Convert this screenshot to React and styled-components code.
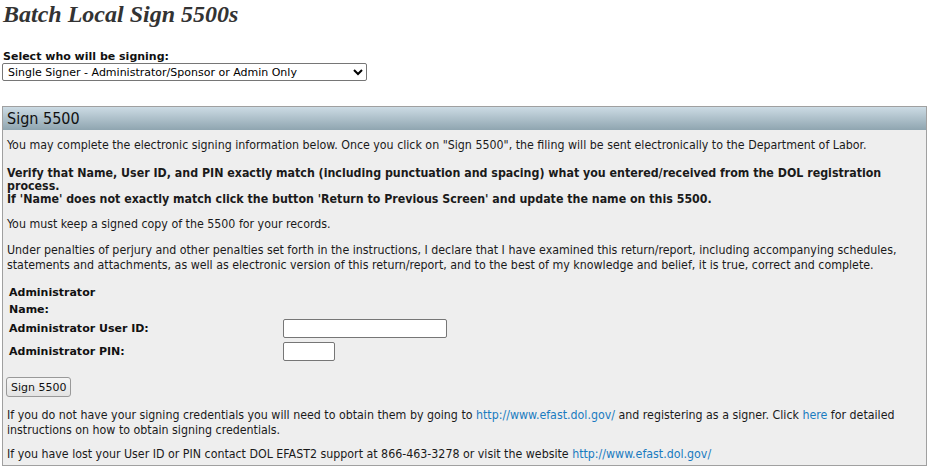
import styled, { createGlobalStyle } from 'styled-components'

const Global = createGlobalStyle`
  body {
    margin: 0;
    padding: 0 3px 0 2px;
    background: #fff;
    font-family: "DejaVu Sans Condensed", "DejaVu Sans", sans-serif;
    color: #1a1a1a;
  }
`;

const Title = styled.h1`
  margin: 0 0 0 1px;
  font-family: "Liberation Serif", serif;
  font-style: italic;
  font-weight: bold;
  font-size: 24px;
  line-height: 28px;
  color: #333;
`;

const SignerField = styled.div`
  margin-top: 22px;
  display: flex;
  flex-direction: column;
  align-items: flex-start;
`;

const SignerLabel = styled.label`
  font-family: "DejaVu Sans", sans-serif;
  font-weight: bold;
  font-size: 11px;
  line-height: 13px;
  padding-left: 1px;
  color: #111;
`;

const Select = styled.select`
  width: 365px;
  height: 18px;
  margin: 0;
  padding: 0 0 0 1px;
  font-family: "DejaVu Sans", sans-serif;
  font-size: 11px;
  color: #000;
  border: 1px solid #767676;
  border-radius: 2px;
  background: #fff;
`;

const Panel = styled.section`
  margin-top: 25px;
  border: 1px solid #a0a0a0;
  background: #eeeeee;
`;

const PanelHeader = styled.div`
  height: 23px;
  padding-left: 4px;
  background: linear-gradient(#ccdbe4, #8fa5b0);
  font-family: "DejaVu Sans Condensed", "DejaVu Sans", sans-serif;
  font-size: 16px;
  line-height: 23px;
  color: #111;
`;

const PanelBody = styled.div`
  padding: 8px 4px 3px 4px;
  font-size: 12.3px;
  line-height: 15px;
`;

const Para = styled.p`
  margin: 0 0 ${p => p.$gap ?? 11}px 0;
  font-weight: ${p => (p.$bold ? 'bold' : 'normal')};
  line-height: ${p => (p.$bold ? 13 : 15)}px;
`;

const Fields = styled.div`
  display: grid;
  grid-template-columns: 274px auto;
  align-items: center;
  row-gap: 4px;
  padding: 5px 0 0 2px;
  justify-items: start;
`;

const FieldLabel = styled.div`
  font-family: "DejaVu Sans", sans-serif;
  font-weight: bold;
  font-size: 11px;
  line-height: 17px;
  color: #111;
  margin-bottom: ${p => (p.$tight ? -3 : 0)}px;
`;

const TextInput = styled.input`
  box-sizing: border-box;
  width: ${p => p.$w}px;
  height: 19px;
  margin: 0;
  border: 1px solid #767676;
  border-radius: 2px;
  background: #fff;
`;

const SignButton = styled.button`
  margin: 16px 0 11px -1px;
  height: 20px;
  padding: 0 4px;
  font-family: "DejaVu Sans", sans-serif;
  font-size: 11px;
  color: #111;
  border: 1px solid #999;
  border-radius: 3px;
  background: linear-gradient(#f5f5f5, #e3e3e3);
`;

const Link = styled.a`
  color: #1a7bc0;
  text-decoration: none;
`;

export default function App() {
  return (
    <>
      <Global />
      <Title>Batch Local Sign 5500s</Title>
      <SignerField>
        <SignerLabel htmlFor="signer">Select who will be signing:</SignerLabel>
        <Select id="signer" defaultValue="single">
          <option value="single">Single Signer - Administrator/Sponsor or Admin Only</option>
        </Select>
      </SignerField>
      <Panel>
        <PanelHeader>Sign 5500</PanelHeader>
        <PanelBody>
          <Para $gap={14}>
            You may complete the electronic signing information below. Once you click on "Sign 5500", the filing will be sent electronically to the Department of Labor.
          </Para>
          <Para $bold $gap={11}>
            Verify that Name, User ID, and PIN exactly match (including punctuation and spacing) what you entered/received from the DOL registration process.
            <br />
            If 'Name' does not exactly match click the button 'Return to Previous Screen' and update the name on this 5500.
          </Para>
          <Para>You must keep a signed copy of the 5500 for your records.</Para>
          <Para $gap={6}>
            Under penalties of perjury and other penalties set forth in the instructions, I declare that I have examined this return/report, including accompanying schedules, statements and attachments, as well as electronic version of this return/report, and to the best of my knowledge and belief, it is true, correct and complete.
          </Para>
          <Fields>
            <FieldLabel $tight>
              Administrator
              <br />
              Name:
            </FieldLabel>
            <div />
            <FieldLabel>Administrator User ID:</FieldLabel>
            <TextInput $w={164} />
            <FieldLabel>Administrator PIN:</FieldLabel>
            <TextInput $w={52} />
          </Fields>
          <SignButton>Sign 5500</SignButton>
          <Para $gap={9}>
            If you do not have your signing credentials you will need to obtain them by going to <Link href="#">http://www.efast.dol.gov/</Link> and registering as a signer. Click <Link href="#">here</Link> for detailed instructions on how to obtain signing credentials.
          </Para>
          <Para $gap={0}>
            If you have lost your User ID or PIN contact DOL EFAST2 support at 866-463-3278 or visit the website <Link href="#">http://www.efast.dol.gov/</Link>
          </Para>
        </PanelBody>
      </Panel>
    </>
  );
}
